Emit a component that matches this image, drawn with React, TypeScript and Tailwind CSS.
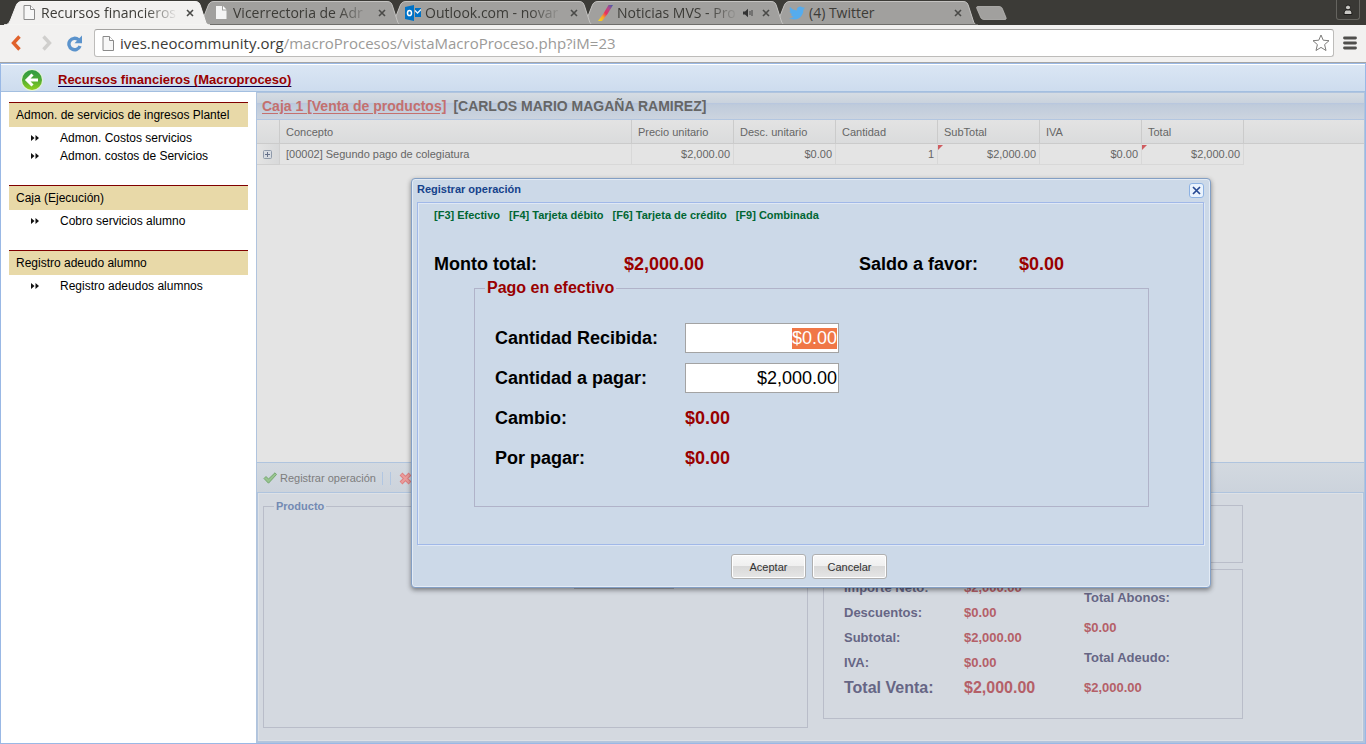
import { useEffect, useRef } from "react";
import type { ReactNode } from "react";

/* ---------- Icons ---------- */

function PageIcon({ className = "" }: { className?: string }) {
  return (
    <svg className={className} viewBox="0 0 12 15" width="12" height="15" aria-hidden="true">
      <path d="M1 .5h6.500l4 4v10H1z" fill="#f7f7f7" stroke="#8a8a8a" />
      <path d="M7.500.5v4h4" fill="#fff" stroke="#8a8a8a" />
    </svg>
  );
}

function SolidPageIcon() {
  return (
    <svg viewBox="0 0 12 15" width="12" height="15" aria-hidden="true">
      <path d="M1 1h6v4.500h4.500V14H1z" fill="#f4f4f4" />
      <path d="M8 1l3.500 3.500H8z" fill="#fff" />
    </svg>
  );
}

function OutlookIcon() {
  return (
    <svg viewBox="0 0 16 16" width="16" height="16" aria-hidden="true">
      <path d="M0 2L9 0v16L0 14z" fill="#0072c6" />
      <path d="M10 3h6v9h-6z" fill="#0072c6" />
      <path d="M10 5.500l2.500 2.500L16 4.500" fill="none" stroke="#e8f2fa" strokeWidth="1.300" />
      <ellipse cx="4.500" cy="8" rx="2" ry="2.600" fill="none" stroke="#fff" strokeWidth="1.500" />
    </svg>
  );
}

function MvsIcon() {
  return (
    <svg viewBox="0 0 16 16" width="16" height="16" aria-hidden="true">
      <defs>
        <linearGradient id="mvs" x1="0" y1="1" x2="1" y2="0">
          <stop offset="0" stopColor="#f4e01e" />
          <stop offset=".3" stopColor="#f7a02a" />
          <stop offset=".5" stopColor="#ec2f5c" />
          <stop offset=".75" stopColor="#b04a8a" />
          <stop offset="1" stopColor="#3b5fb0" />
        </linearGradient>
      </defs>
      <path d="M11.500 0H16L10.500 9 5 16H1l5.500-7.500z" fill="url(#mvs)" />
    </svg>
  );
}

function TwitterIcon() {
  return (
    <svg viewBox="0 0 24 24" width="16" height="16" aria-hidden="true">
      <path
        fill="#55acee"
        d="M23.950 4.570a10 10 0 01-2.820.77 4.960 4.960 0 002.160-2.720c-.95.55-2 .95-3.130 1.180a4.920 4.920 0 00-8.380 4.480C7.690 8.090 4.070 6.130 1.640 3.160a4.820 4.820 0 00-.67 2.480c0 1.710.87 3.210 2.190 4.100a4.900 4.900 0 01-2.230-.62v.06a4.920 4.920 0 003.950 4.830 5 5 0 01-2.210.09 4.940 4.940 0 004.600 3.420A9.870 9.870 0 010 19.540a13.990 13.990 0 007.560 2.210c9.050 0 14-7.500 14-13.980 0-.21 0-.42-.02-.63a9.940 9.940 0 002.410-2.570z"
      />
    </svg>
  );
}

function SpeakerIcon() {
  return (
    <svg viewBox="0 0 12 10" width="12" height="10" aria-hidden="true">
      <path d="M1 3.500h2L6 .8v8.400L3 6.500H1z" fill="#333" />
      <path d="M8 3v4M10 2v6" stroke="#444" fill="none" />
    </svg>
  );
}

function CloseGlyph() {
  return (
    <svg viewBox="0 0 8 8" width="8" height="8" aria-hidden="true">
      <path d="M1 1l6 6M7 1L1 7" stroke="#4a4a48" strokeWidth="1.600" />
    </svg>
  );
}

function BackIcon() {
  return (
    <svg viewBox="0 0 24 24" width="24" height="24" aria-hidden="true">
      <defs>
        <linearGradient id="back" x1="0" y1="0" x2="0" y2="1">
          <stop offset="0" stopColor="#2f9a44" />
          <stop offset="0.45" stopColor="#4aa836" />
          <stop offset="1" stopColor="#8fd01f" />
        </linearGradient>
      </defs>
      <circle cx="12" cy="12" r="11" fill="#e2f2d6" />
      <circle cx="12" cy="12" r="10" fill="url(#back)" />
      <path d="M12.500 6.500L7 12l5.500 5.500M7.500 12H18" fill="none" stroke="#fff" strokeWidth="3" />
    </svg>
  );
}

function DoubleArrow() {
  return (
    <svg viewBox="0 0 8 6" width="8" height="6" aria-hidden="true">
      <path d="M0 0l3.500 3L0 6zM4.500 0L8 3 4.500 6z" fill="#111" />
    </svg>
  );
}

/* ---------- Browser frame ---------- */

interface TabProps {
  title: string;
  icon: ReactNode;
  layer: string;
  active?: boolean;
  audible?: boolean;
}

function BrowserTab({ title, icon, layer, active = false, audible = false }: TabProps) {
  const fill = active ? "#f2f1f0" : "#a1a09e";
  return (
    <div className={`relative -mr-[14px] h-[25px] w-[206px] shrink-0 ${layer}`}>
      <svg className="absolute inset-0" viewBox="0 0 206 25" width="206" height="25" aria-hidden="true">
        <path
          d="M0 25C4 25 5 23 6.500 20L12 6C13.200 3 14.500 1.500 18 1.500H191C194.500 1.500 195.500 3 196.500 6L201 20C202 23.500 203 25 206 25Z"
          fill={fill}
          stroke={active ? "#f7f6f5" : "#c4c3c1"}
          strokeWidth="1"
        />
        {!active && <path d="M0 24.500H206" stroke="#6f6e6b" />}
      </svg>
      <div className="relative flex h-full items-center pr-[13px] pl-[17px]">
        <span className="mr-1 flex w-4 shrink-0 justify-center">{icon}</span>
        <span
          className={`min-w-0 flex-1 overflow-hidden text-[14px] leading-5 whitespace-nowrap ${
            title.length > 12 ? "[mask-image:linear-gradient(to_right,black_76%,transparent)]" : ""
          }`}
        >
          {title}
        </span>
        {audible && (
          <span className="ml-1">
            <SpeakerIcon />
          </span>
        )}
        <button type="button" aria-label="Cerrar pestaña" className="ml-1 flex p-[3px] pl-1">
          <CloseGlyph />
        </button>
      </div>
    </div>
  );
}

function BrowserFrame() {
  return (
    <header className="font-['Open_Sans',sans-serif] text-[#3c3b37]">
      <div className="flex h-[25px] bg-[#3c3b37] pl-1">
        <BrowserTab active layer="z-50" title="Recursos financieros" icon={<PageIcon />} />
        <BrowserTab layer="z-40" title="Vicerrectoria de Adr" icon={<SolidPageIcon />} />
        <BrowserTab layer="z-30" title="Outlook.com - novar" icon={<OutlookIcon />} />
        <BrowserTab layer="z-20" title="Noticias MVS - Pro" audible icon={<MvsIcon />} />
        <BrowserTab layer="z-10" title="(4) Twitter" icon={<TwitterIcon />} />
        <button type="button" aria-label="Nueva pestaña" className="mt-[6px] ml-3 h-[14px]">
          <svg viewBox="0 0 31 14" width="31" height="14" aria-hidden="true">
            <path
              d="M2 .5H23C25 .5 26 1.500 26.500 3L30 11.500C30.500 13 30 13.500 29 13.500H8C6 13.500 5 12.500 4.500 11L.8 2.500C.3 1 .8.500 2 .5z"
              fill="#a1a09e"
              stroke="#c0bfbd"
              strokeWidth=".7"
            />
          </svg>
        </button>
        <button
          type="button"
          aria-label="Usuario"
          className="mr-[6px] ml-auto flex h-5 w-6 items-center justify-center rounded-b-[3px] border border-t-0 border-[#65645f] bg-[#3a3935]"
        >
          <svg viewBox="0 0 12 12" width="12" height="12" aria-hidden="true">
            <circle cx="6" cy="3.500" r="2.500" fill="#c9c8c4" stroke="#1e1d1b" />
            <path d="M2 10.500c0-3 1-4.500 2.500-4.500h3C9 6 10 7.500 10 10.500z" fill="#c9c8c4" stroke="#1e1d1b" />
          </svg>
        </button>
      </div>
      <div className="flex h-[38px] items-center border-b border-[#a5a5a5] bg-[#f2f1f0] pr-[9px] pb-px pl-[10px]">
        <button type="button" aria-label="Atrás">
          <svg viewBox="0 0 12 16" width="12" height="16" aria-hidden="true">
            <path d="M9.500 1.500L3.500 8l6 6.500" fill="none" stroke="#e0622c" strokeWidth="3.400" />
          </svg>
        </button>
        <button type="button" aria-label="Adelante" className="ml-[19px]">
          <svg viewBox="0 0 12 16" width="12" height="16" aria-hidden="true">
            <path d="M2.500 1.500l6 6.500-6 6.500" fill="none" stroke="#d0cfcd" strokeWidth="3.400" />
          </svg>
        </button>
        <button type="button" aria-label="Recargar" className="ml-[13px]">
          <svg viewBox="0 0 17 17" width="17" height="17" aria-hidden="true">
            <path d="M12.500 4.800A5.700 5.700 0 1 0 14 11" fill="none" stroke="#5b93cc" strokeWidth="3.400" />
            <path d="M16 .5v7.800H8.500z" fill="#5b93cc" />
          </svg>
        </button>
        <div className="ml-[11px] flex h-7 min-w-0 flex-1 items-center rounded-[3px] border border-[#bdbcba] border-t-[#a3a2a0] bg-white px-[7px]">
          <PageIcon />
          <div className="ml-[6px] min-w-0 flex-1 overflow-hidden text-[15px] leading-5 whitespace-nowrap">
            ives.neocommunity.org<span className="text-[#9b9a98]">/macroProcesos/vistaMacroProceso.php?iM=23</span>
          </div>
          <button type="button" aria-label="Marcador" className="-mr-1">
            <svg viewBox="0 0 18 18" width="18" height="18" aria-hidden="true">
              <path
                d="M9 1l2.200 5.200 5.800.5-4.400 3.900L14 16.500 9 13.400 4 16.500l1.400-5.900L1 6.700l5.800-.5z"
                fill="#fff"
                stroke="#7d7c7a"
                strokeLinejoin="round"
              />
            </svg>
          </button>
        </div>
        <button type="button" aria-label="Menú" className="ml-[9px]">
          <svg viewBox="0 0 14 14" width="14" height="14" aria-hidden="true">
            <path d="M1.500 2h11M1.500 7h11M1.500 12h11" stroke="#4f4e4c" strokeWidth="2.800" strokeLinecap="round" />
          </svg>
        </button>
      </div>
    </header>
  );
}

/* ---------- Sidebar ---------- */

const menu = [
  { title: "Admon. de servicios de ingresos Plantel", items: ["Admon. Costos servicios", "Admon. costos de Servicios"] },
  { title: "Caja (Ejecución)", items: ["Cobro servicios alumno"] },
  { title: "Registro adeudo alumno", items: ["Registro adeudos alumnos"] },
];

function Sidebar() {
  return (
    <nav className="w-[255px] shrink-0 bg-white px-2 pt-[10px] text-[12px] text-black">
      {menu.map((section) => (
        <section key={section.title} className="mb-5">
          <h2 className="h-[25px] border-t border-[#800000] bg-[#e8d9a8] px-[7px] leading-6">{section.title}</h2>
          <ul className="pt-[2px]">
            {section.items.map((item) => (
              <li key={item} className="flex h-[18px] items-center pl-[22px]">
                <DoubleArrow />
                <a href="#" className="ml-[21px] leading-[18px]">
                  {item}
                </a>
              </li>
            ))}
          </ul>
        </section>
      ))}
    </nav>
  );
}

/* ---------- Sales grid ---------- */

const numericColumns = [
  { label: "Precio unitario", value: "$2,000.00", edited: false },
  { label: "Desc. unitario", value: "$0.00", edited: false },
  { label: "Cantidad", value: "1", edited: false },
  { label: "SubTotal", value: "$2,000.00", edited: true },
  { label: "IVA", value: "$0.00", edited: false },
  { label: "Total", value: "$2,000.00", edited: true },
];

function SalesGrid() {
  return (
    <div className="flex-1 bg-[#e4e4e4]">
      <table className="w-full table-fixed border-separate border-spacing-0 text-[11px] text-[#666]">
        <colgroup>
          <col className="w-[23px]" />
          <col className="w-[352px]" />
          {numericColumns.map((c) => (
            <col key={c.label} className="w-[102px]" />
          ))}
          <col />
        </colgroup>
        <thead>
          <tr className="h-6 bg-linear-to-b from-[#e3e3e3] to-[#dadbdc] text-left">
            <th className="border-r border-b border-[#cbcbcb]" aria-label="Detalle" />
            <th className="border-r border-b border-[#cbcbcb] pt-[2px] pl-[6px] font-normal">Concepto</th>
            {numericColumns.map((c) => (
              <th key={c.label} className="border-r border-b border-[#cbcbcb] pt-[2px] pl-[6px] font-normal">
                {c.label}
              </th>
            ))}
            <th className="border-b border-[#cbcbcb]" aria-label="Relleno" />
          </tr>
        </thead>
        <tbody>
          <tr className="h-[21px]">
            <td className="border-r border-b border-[#d0d0d0] bg-linear-to-r from-[#e4e4e4] to-[#d8d9da] pl-[6px]">
              <button type="button" aria-label="Expandir" className="flex">
                <svg viewBox="0 0 9 9" width="9" height="9" aria-hidden="true">
                  <rect x=".5" y=".5" width="8" height="8" rx="1" fill="#d8dce2" stroke="#8f9aaa" />
                  <path d="M2 4.500h5M4.500 2v5" stroke="#66718a" />
                </svg>
              </button>
            </td>
            <td className="border-r border-b border-[#d8d8d8] pl-[6px]">[00002] Segundo pago de colegiatura</td>
            {numericColumns.map((c) => (
              <td key={c.label} className="relative border-r border-b border-[#d8d8d8] pr-[3px] text-right">
                {c.edited && (
                  <svg className="absolute top-px left-0" viewBox="0 0 5 5" width="5" height="5" aria-hidden="true">
                    <path d="M0 0h5L0 5z" fill="#cf5c60" />
                  </svg>
                )}
                {c.value}
              </td>
            ))}
            <td />
          </tr>
        </tbody>
      </table>
    </div>
  );
}

function ActionBar() {
  return (
    <div className="flex h-[31px] items-center border-y border-[#afc4de] bg-linear-to-b from-[#d3d9e0] to-[#ccd3dc] px-[6px] pt-px text-[11px] text-[#7d7d7d]">
      <button type="button" className="flex items-center gap-[3px]">
        <svg viewBox="0 0 14 12" width="14" height="12" aria-hidden="true">
          <path d="M1 6.500L3 4.500l2.500 2.500L12 .8l1.500 1.700L5.500 11.200z" fill="#98c48f" stroke="#75a870" />
        </svg>
        Registrar operación
      </button>
      <span className="ml-[6px] h-[13px] w-px bg-[#b1c6e1]" />
      <span className="ml-[7px] h-[13px] w-px bg-[#b1c6e1]" />
      <button type="button" aria-label="Cancelar operación" className="ml-2">
        <svg viewBox="0 0 13 13" width="13" height="13" aria-hidden="true">
          <path d="M2 2l9 9M11 2l-9 9" stroke="#df7f80" strokeWidth="4" />
          <path d="M2.500 2.500l8 8M10.500 2.500l-8 8" stroke="#ea9d9c" strokeWidth="2" />
        </svg>
      </button>
    </div>
  );
}

const totals = [
  ["Importe Neto:", "$2,000.00"],
  ["Descuentos:", "$0.00"],
  ["Subtotal:", "$2,000.00"],
  ["IVA:", "$0.00"],
];

function Summary() {
  return (
    <div className="flex items-start border border-t-0 border-[#b4c5dc] bg-[#d4d9e0] pt-1 pb-[13px] pl-[5px] shadow-[inset_0_0_0_1px_#dde1e6]">
      <fieldset className="h-[231px] w-[545px] border border-[#b9bdc9]">
        <legend className="ml-[10px] px-[2px] text-[11px] leading-[18px] font-bold text-[#738ab3]">Producto</legend>
        <div className="mt-[66px] ml-[310px] h-2 w-[100px] border-b border-[#abafb7]" />
      </fieldset>
      <div className="mt-2 ml-[15px] w-[420px] text-[13px] font-bold text-[#666685]">
        <div className="h-[58px] border border-[#b9bdc9]" />
        <div className="mt-[6px] flex h-[150px] border border-[#b9bdc9] pl-5 leading-[25px]">
          <dl className="mt-[5px] grid w-[240px] grid-cols-[120px_1fr] content-start">
            {totals.map(([label, value]) => (
              <div key={label} className="contents">
                <dt>{label}</dt>
                <dd className="text-[#b46068]">{value}</dd>
              </div>
            ))}
            <dt className="text-[16px] leading-[26px]">Total Venta:</dt>
            <dd className="text-[16px] leading-[26px] text-[#b46068]">$2,000.00</dd>
          </dl>
          <dl className="mt-[13px] leading-[30px]">
            <dt>Total Abonos:</dt>
            <dd className="text-[#b46068]">$0.00</dd>
            <dt>Total Adeudo:</dt>
            <dd className="text-[#b46068]">$2,000.00</dd>
          </dl>
        </div>
      </div>
    </div>
  );
}

/* ---------- Payment dialog ---------- */

const shortcuts = ["[F3] Efectivo", "[F4] Tarjeta débito", "[F6] Tarjeta de crédito", "[F9] Combinada"];

function DialogButton({ children }: { children: ReactNode }) {
  return (
    <button
      type="button"
      className="h-[25px] w-[75px] rounded-[3px] border border-[#b0b0b0] bg-[linear-gradient(#f8f8f8,#efefef_50%,#d9d9d9_50%,#e6e6e6)] pt-[2px] text-[11px] text-[#333] shadow-[inset_0_0_0_1px_#fff]"
    >
      {children}
    </button>
  );
}

function PaymentDialog() {
  const received = useRef<HTMLInputElement>(null);

  useEffect(() => {
    received.current?.focus();
    received.current?.select();
  }, []);

  const inputStyle =
    "h-[30px] w-[154px] border border-[#a3a3a3] bg-white pr-px text-right text-[18px] font-normal text-black outline-none selection:bg-[#f07746] selection:text-white";

  return (
    <div
      role="dialog"
      aria-labelledby="dialog-title"
      className="w-[800px] rounded-[4px] border border-[#839fc4] bg-[#ccd9e8] pr-[6px] pl-[5px] text-black shadow-[0_2px_5px_0_rgba(0,0,0,0.45),inset_0_0_0_1px_#e3ebf5]"
    >
      <div className="flex h-[23px] items-start justify-between pt-1">
        <h2 id="dialog-title" className="text-[11px] leading-[13px] font-bold text-[#15428b]">
          Registrar operación
        </h2>
        <button
          type="button"
          aria-label="Cerrar"
          className="flex h-[15px] w-[15px] items-center justify-center rounded-[3px] border border-[#8db2e3] bg-[#eaf3fd]"
        >
          <svg viewBox="0 0 9 9" width="9" height="9" aria-hidden="true">
            <path d="M1 1l7 7M8 1L1 8" stroke="#274a94" strokeWidth="1.700" />
          </svg>
        </button>
      </div>
      <div className="h-[343px] border border-[#a0b8e8] pt-[3px] pl-4 shadow-[inset_1px_1px_0_#dfe8f5,1px_1px_0_#dfe8f5]">
        <div className="flex gap-[9px] text-[11px] leading-[18px] font-bold text-[#006633]">
          {shortcuts.map((s) => (
            <span key={s}>{s}</span>
          ))}
        </div>
        <dl className="mt-[30px] grid grid-cols-[190px_235px_160px_1fr] text-[18px] leading-5 font-bold">
          <dt>Monto total:</dt>
          <dd className="text-[#990000]">$2,000.00</dd>
          <dt>Saldo a favor:</dt>
          <dd className="text-[#990000]">$0.00</dd>
        </dl>
        <fieldset className="mt-1 ml-10 h-[229px] w-[675px] border border-[#b0b3c9] text-[18px] font-bold">
          <legend className="ml-[10px] px-[2px] text-[16px] leading-5 text-[#990000]">Pago en efectivo</legend>
          <div className="mt-5 ml-5 grid auto-rows-[40px] grid-cols-[190px_1fr] items-center">
            <label htmlFor="recibida">Cantidad Recibida:</label>
            <div className="flex">
              <input id="recibida" ref={received} className={inputStyle} defaultValue="$0.00" />
            </div>
            <label htmlFor="pagar">Cantidad a pagar:</label>
            <div className="flex">
              <input id="pagar" className={inputStyle} defaultValue="$2,000.00" />
            </div>
            <span>Cambio:</span>
            <output className="text-[#990000]">$0.00</output>
            <span>Por pagar:</span>
            <output className="text-[#990000]">$0.00</output>
          </div>
        </fieldset>
      </div>
      <div className="flex h-[42px] items-center justify-center gap-[6px] pr-[3px]">
        <DialogButton>Aceptar</DialogButton>
        <DialogButton>Cancelar</DialogButton>
      </div>
    </div>
  );
}

/* ---------- Page ---------- */

export default function App() {
  return (
    <div className="flex min-h-screen flex-col bg-white font-['Liberation_Sans',Arial,sans-serif]">
      <BrowserFrame />
      <div className="flex flex-1 flex-col border border-[#99b8e5]">
        <div className="flex h-7 items-center border-t border-b border-t-white border-b-[#a3bfe0] bg-linear-to-b from-[#dae6f4] to-[#cddcee] pl-[19px]">
          <a href="#" aria-label="Regresar" className="flex pt-1">
            <BackIcon />
          </a>
          <a
            href="#"
            className="ml-[14px] pt-1 text-[13px] font-bold text-[#990000] underline decoration-[#000050] underline-offset-2"
          >
            Recursos financieros (Macroproceso)
          </a>
        </div>
        <div className="flex flex-1">
          <Sidebar />
          <main className="relative flex min-w-0 flex-1 flex-col border border-[#b0c4de]">
            <h1 className="flex h-[27px] items-center gap-[7px] border-b border-[#b3c6e0] bg-[linear-gradient(#d5dce3,#c9d2dd_40%,#b8c7de_40%,#bfcbdb_46%,#ccd4df)] pl-[5px] text-[14px] font-bold text-[#666]">
              <a href="#" className="text-[#c4706e] underline underline-offset-2">
                Caja 1 [Venta de productos]
              </a>
              <span>[CARLOS MARIO MAGAÑA RAMIREZ]</span>
            </h1>
            <SalesGrid />
            <ActionBar />
            <Summary />
            <div className="absolute inset-0 flex items-start justify-center pt-[85px] pl-px">
              <PaymentDialog />
            </div>
          </main>
        </div>
      </div>
    </div>
  );
}
